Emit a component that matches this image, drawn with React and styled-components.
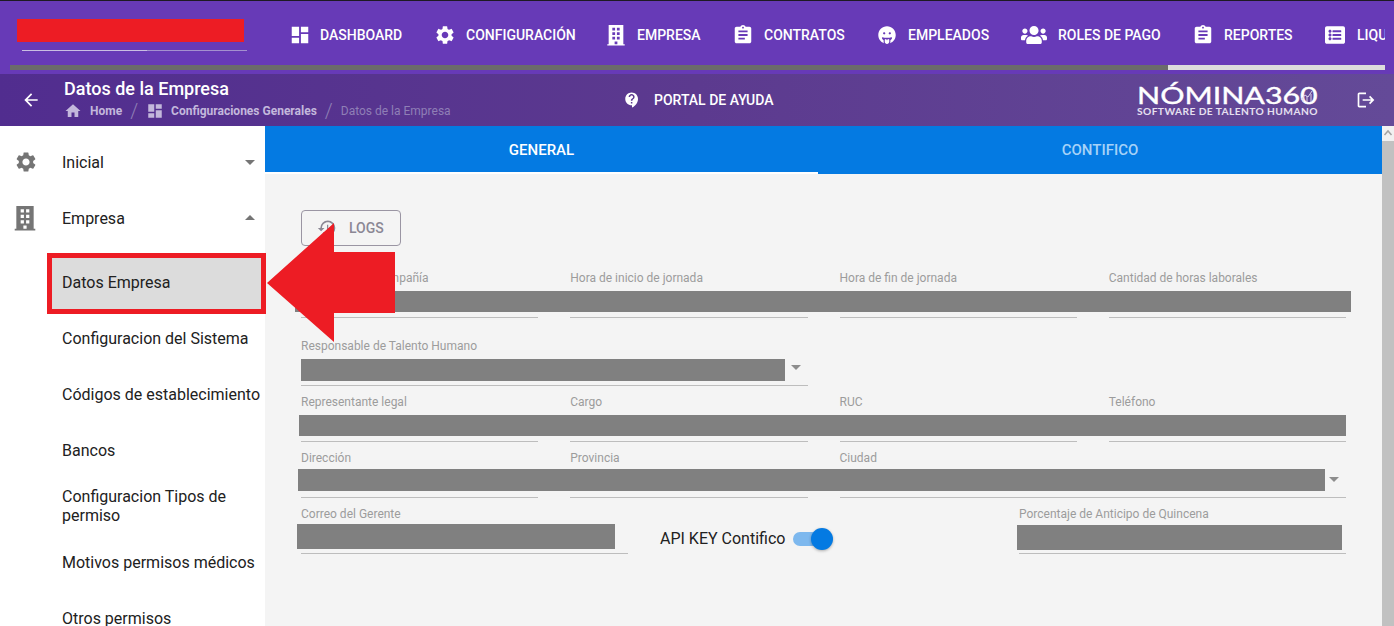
import React from 'react';
import styled, { createGlobalStyle } from 'styled-components';
import { MdDashboard, MdSettings, MdAssignment, MdArrowBack, MdHome, MdContactSupport, MdHistory, MdArrowDropDown, MdArrowDropUp, MdLogout } from 'react-icons/md';
import { FaGrinTongue, FaUsers, FaListAlt } from 'react-icons/fa';

const Global = createGlobalStyle`
  html, body { margin: 0; padding: 0; height: 100%; overflow: hidden; background: #fff; }
  body { font-family: Roboto, "Liberation Sans", sans-serif; }
  * { box-sizing: border-box; }
`;

const Page = styled.div`
  position: relative;
  width: 1394px;
  height: 626px;
  overflow: hidden;
  display: flex;
  flex-direction: column;
  border-top: 1px solid #1d1a24;
`;

const TopBar = styled.header`
  height: 73px;
  flex: none;
  background: #673ab7;
  display: flex;
  flex-direction: column;
  overflow: hidden;
`;
const TopRow = styled.div`
  height: 64px;
  width: 1385px;
  overflow: hidden;
  display: flex;
  align-items: center;
`;
const Brand = styled.div`
  width: 291px;
  flex: none;
  height: 100%;
  padding: 49px 0 0 22px;
`;
const BrandRule = styled.div`
  width: 225px;
  height: 1px;
  background: linear-gradient(90deg, #c9bee3 0 125px, #a491cf 125px 100%);
`;
const Nav = styled.nav`
  display: flex;
  align-items: center;
  height: 100%;
  margin-top: 4px;
`;
const NavItem = styled.a`
  display: flex;
  align-items: center;
  flex: none;
  width: ${p => p.$w}px;
  color: #fff;
  font-size: 14px;
  font-weight: 500;
  text-transform: uppercase;
  white-space: nowrap;
  svg { flex: none; }
`;
const NavIconBox = styled.span`
  width: ${p => p.$w}px;
  flex: none;
  display: flex;
  align-items: center;
`;
const HScrollTrack = styled.div`
  margin: 0 0 0 10px;
  width: 1375px;
  height: 5px;
  background: #dcdcdc;
`;
const HScrollThumb = styled.div`
  width: 1158px;
  height: 100%;
  background: #6b6b6b;
`;

const SubHeader = styled.div`
  height: 52px;
  flex: none;
  display: flex;
  align-items: center;
  color: #fff;
  background: linear-gradient(90deg, #512d8f 0%, #5c3a8f 50%, #644a98 100%);
`;
const BackSlot = styled.div`
  width: 64px;
  flex: none;
  padding-left: 21px;
  display: flex;
  align-items: center;
`;
const TitleBlock = styled.div`
  width: 559px;
  flex: none;
  padding-bottom: 2px;
`;
const PageTitle = styled.div`
  font-size: 18px;
  font-weight: 500;
  line-height: 24px;
`;
const Crumbs = styled.div`
  display: flex;
  align-items: center;
  height: 20px;
  font-size: 12px;
  font-weight: 700;
  color: #c3b8dc;
  svg { flex: none; color: #c3b8dc; }
`;
const CrumbText = styled.span`
  margin-left: ${p => p.$ml || 0}px;
  color: ${p => (p.$muted ? '#8f7fb6' : '#c3b8dc')};
  font-weight: ${p => (p.$muted ? 400 : 700)};
  white-space: nowrap;
`;
const Slash = styled.span`
  margin: 0 8px;
  font-size: 20px;
  font-weight: 300;
  color: #8f7fb6;
`;
const Help = styled.div`
  width: 514px;
  flex: none;
  display: flex;
  align-items: center;
  gap: 13px;
  font-size: 14px;
  font-weight: 500;
  white-space: nowrap;
  margin-top: -1px;
`;
const Logo = styled.div`
  width: 219px;
  flex: none;
  display: flex;
  flex-direction: column;
  color: #fff;
  white-space: nowrap;
  font-family: Lato, sans-serif;
  margin-top: 3px;
`;
const LogoMark = styled.div`
  position: relative;
  height: 17px;
  font-size: 23px;
  font-weight: 400;
  line-height: 17px;
  -webkit-text-stroke: 0.35px #fff;
`;
const LogoWord = styled.span`
  display: inline-block;
  transform: scaleX(1.32);
  transform-origin: left center;
`;
const LogoChart = styled.svg`
  position: absolute;
  left: 159px;
  top: -1px;
  width: 22px;
  height: 20px;
`;
const LogoSmall = styled.div`
  font-size: 10.2px;
  line-height: 10px;
  font-weight: 700;
  letter-spacing: 0.42px;
  color: #e6e0f0;
  margin-top: 2px;
`;

const Body = styled.div`
  flex: 1;
  min-height: 0;
  display: flex;
`;
const Sidebar = styled.aside`
  width: 265px;
  flex: none;
  padding-top: 8px;
  background: #fff;
  overflow: hidden;
`;
const MenuRow = styled.div`
  height: 56px;
  display: flex;
  align-items: center;
  position: relative;
  padding-left: 62px;
  font-size: 16px;
  line-height: 19px;
  color: #212121;
`;
const MenuIcon = styled.span`
  position: absolute;
  left: ${p => p.$l}px;
  top: 50%;
  transform: translateY(-50%);
  display: flex;
  color: #757575;
`;
const MenuCaret = styled.span`
  position: absolute;
  right: 3px;
  top: 50%;
  transform: translateY(-50%);
  display: flex;
  color: #757575;
`;
const SubMenu = styled.div`
  padding-top: 8px;
`;
const SubRow = styled(MenuRow)`
  margin-left: 47px;
  padding-left: 15px;
  padding-right: 2px;
  white-space: ${p => (p.$wrap ? 'normal' : 'nowrap')};
  background: ${p => (p.$active ? '#dcdcdc' : 'transparent')};
`;

const Main = styled.main`
  flex: 1;
  min-width: 0;
  background: #f4f4f4;
`;
const Tabs = styled.div`
  display: flex;
  height: 48px;
  background: #047ae2;
`;
const Tab = styled.div`
  flex: ${p => (p.$active ? '0 0 553px' : '1')};
  display: flex;
  align-items: center;
  justify-content: center;
  font-size: 15px;
  font-weight: 500;
  color: ${p => (p.$active ? '#fff' : '#a6d2f8')};
  border-bottom: 2px solid ${p => (p.$active ? '#fff' : 'transparent')};
  padding-top: 2px;
`;
const Form = styled.div`
  padding: 36px 36px 0;
`;
const LogsButton = styled.button`
  width: 100px;
  height: 36px;
  margin-bottom: 22px;
  display: flex;
  align-items: center;
  gap: 12px;
  padding: 0 0 0 15px;
  background: transparent;
  border: 1px solid #9a95a3;
  border-radius: 4px;
  font: 500 14px Roboto, sans-serif;
  color: #8b8794;
`;
const FourCols = styled.div`
  display: grid;
  grid-template-columns: repeat(4, 1fr);
  column-gap: 32px;
`;
const ThreeCols = styled.div`
  display: grid;
  grid-template-columns: repeat(3, 1fr);
  column-gap: 32px;
`;
const Field = styled.div`
  height: ${p => (p.$first ? 68 : 56)}px;
  grid-column: span ${p => p.$span || 1};
  position: relative;
`;
const FieldLabel = styled.div`
  font-size: 12px;
  line-height: 20px;
  color: #9c9c9c;
  white-space: nowrap;
`;
const FieldLine = styled.div`
  height: 30px;
  border-bottom: 1px solid #bdbdbd;
`;
const SelectCaret = styled.span`
  position: absolute;
  right: 0;
  top: 19px;
  display: flex;
  color: #8d8d8d;
`;
const SwitchCell = styled.div`
  height: 56px;
  display: flex;
  align-items: center;
  gap: 8px;
  font-size: 16px;
  color: #212121;
  padding-top: 12px;
`;
const SwitchTrack = styled.span`
  position: relative;
  width: 34px;
  height: 14px;
  margin-top: 1px;
  border-radius: 7px;
  background: #7db8ee;
`;
const SwitchKnob = styled.span`
  position: absolute;
  right: -6px;
  top: -4px;
  width: 22px;
  height: 22px;
  border-radius: 50%;
  background: #047ae2;
  box-shadow: 0 1px 3px rgba(0, 0, 0, 0.3);
`;

const VScroll = styled.div`
  width: 12px;
  flex: none;
  background: #f1f1f1;
  display: flex;
  flex-direction: column;
  align-items: center;
`;
const VScrollArrow = styled.svg`
  flex: none;
  width: 12px;
  height: 15px;
`;
const VScrollThumb = styled.div`
  flex: 1;
  width: 100%;
  background: #c1c1c1;
`;

/* Censored areas and the annotation that lie over the finished page */
const Redact = styled.div`
  position: absolute;
  left: ${p => p.$x}px;
  top: ${p => p.$y}px;
  width: ${p => p.$w}px;
  height: ${p => p.$h}px;
  background: ${p => p.$c || '#808080'};
`;
const Frame = styled.div`
  position: absolute;
  left: 47px;
  top: 252px;
  width: 219px;
  height: 61px;
  border: 5px solid #ed1c24;
`;
const ArrowMark = styled.svg`
  position: absolute;
  left: 266px;
  top: 221px;
  width: 132px;
  height: 122px;
`;

const Building = ({ size, color = 'currentColor' }) => (
  <svg width={size} height={size} viewBox="0 0 24 24" fill={color}>
    <path fillRule="evenodd" d="M4 1h16v21h1.5v1.5h-19V22H4V1zM8 4v3h3V4H8zm5 0v3h3V4h-3zM8 9v3h3V9H8zm5 0v3h3V9h-3zm-5 5v3h3v-3H8zm5 0v3h3v-3h-3zm-2.5 5v3h3v-3h-3z" />
  </svg>
);

const navItems = [
  { label: 'Dashboard', w: 145, iw: 29, Icon: MdDashboard, s: 22, o: -2 },
  { label: 'Configuración', w: 172, iw: 30, Icon: MdSettings, s: 22, o: -2 },
  { label: 'Empresa', w: 127, iw: 29, Icon: Building, s: 22, o: -3 },
  { label: 'Contratos', w: 143, iw: 29, Icon: MdAssignment, s: 22, o: -3 },
  { label: 'Empleados', w: 143, iw: 30, Icon: FaGrinTongue, s: 18, o: 0 },
  { label: 'Roles de pago', w: 174, iw: 37, Icon: FaUsers, s: 26, o: 0 },
  { label: 'Reportes', w: 130, iw: 29, Icon: MdAssignment, s: 22, o: -3 },
  { label: 'Liquidaciones', w: 150, iw: 32, Icon: FaListAlt, s: 20, o: 0 },
];

const subItems = [
  { t: 'Datos Empresa', active: true },
  { t: 'Configuracion del Sistema' },
  { t: 'Códigos de establecimiento' },
  { t: 'Bancos' },
  { t: 'Configuracion Tipos de permiso', wrap: true },
  { t: 'Motivos permisos médicos' },
  { t: 'Otros permisos' },
];

const TextField = ({ label, span, select, first }) => (
  <Field $span={span} $first={first}>
    <FieldLabel>{label}</FieldLabel>
    <FieldLine />
    {select && (
      <SelectCaret>
        <MdArrowDropDown size={24} />
      </SelectCaret>
    )}
  </Field>
);

export default function App() {
  return (
    <>
      <Global />
      <Page>
        <TopBar>
          <TopRow>
            <Brand>
              <BrandRule />
            </Brand>
            <Nav>
              {navItems.map(({ label, w, iw, Icon, s, o }) => (
                <NavItem key={label} $w={w}>
                  <NavIconBox $w={iw}>
                    <span style={{ display: 'flex', marginLeft: o }}>
                      <Icon size={s} color="#fff" />
                    </span>
                  </NavIconBox>
                  {label}
                </NavItem>
              ))}
            </Nav>
          </TopRow>
          <HScrollTrack>
            <HScrollThumb />
          </HScrollTrack>
        </TopBar>

        <SubHeader>
          <BackSlot>
            <MdArrowBack size={20} />
          </BackSlot>
          <TitleBlock>
            <PageTitle>Datos de la Empresa</PageTitle>
            <Crumbs>
              <MdHome size={18} />
              <CrumbText $ml={8}>Home</CrumbText>
              <Slash>/</Slash>
              <MdDashboard size={18} />
              <CrumbText $ml={7}>Configuraciones Generales</CrumbText>
              <Slash>/</Slash>
              <CrumbText $muted>Datos de la Empresa</CrumbText>
            </Crumbs>
          </TitleBlock>
          <Help>
            <MdContactSupport size={18} />
            PORTAL DE AYUDA
          </Help>
          <Logo>
            <LogoMark>
              <LogoWord>NÓMINA360</LogoWord>
              <LogoChart viewBox="0 0 22 20">
                <g stroke="#d9d0ea" strokeWidth="1" fill="none">
                  <path d="M5 14l4-5 3 2 4-6" />
                  <path d="M7 16V12M11 16V10M15 16V8" />
                </g>
              </LogoChart>
            </LogoMark>
            <LogoSmall>SOFTWARE DE TALENTO HUMANO</LogoSmall>
          </Logo>
          <MdLogout size={20} />
        </SubHeader>

        <Body>
          <Sidebar>
            <MenuRow>
              <MenuIcon $l={14}>
                <MdSettings size={24} />
              </MenuIcon>
              Inicial
              <MenuCaret>
                <MdArrowDropDown size={24} />
              </MenuCaret>
            </MenuRow>
            <MenuRow>
              <MenuIcon $l={12}>
                <Building size={26} />
              </MenuIcon>
              Empresa
              <MenuCaret>
                <MdArrowDropUp size={24} />
              </MenuCaret>
            </MenuRow>
            <SubMenu>
              {subItems.map(i => (
                <SubRow key={i.t} $active={i.active} $wrap={i.wrap}>
                  {i.t}
                </SubRow>
              ))}
            </SubMenu>
          </Sidebar>

          <Main>
            <Tabs>
              <Tab $active>GENERAL</Tab>
              <Tab>CONTIFICO</Tab>
            </Tabs>
            <Form>
              <LogsButton>
                <MdHistory size={20} />
                LOGS
              </LogsButton>
              <FourCols>
                <TextField first label="Nombre de la compañía" />
                <TextField first label="Hora de inicio de jornada" />
                <TextField first label="Hora de fin de jornada" />
                <TextField first label="Cantidad de horas laborales" />
                <TextField label="Responsable de Talento Humano" span={2} select />
                <Field $span={2} />
                <TextField label="Representante legal" />
                <TextField label="Cargo" />
                <TextField label="RUC" />
                <TextField label="Teléfono" />
                <TextField label="Dirección" />
                <TextField label="Provincia" />
                <TextField label="Ciudad" span={2} select />
              </FourCols>
              <ThreeCols>
                <TextField label="Correo del Gerente" />
                <SwitchCell>
                  API KEY Contifico
                  <SwitchTrack>
                    <SwitchKnob />
                  </SwitchTrack>
                </SwitchCell>
                <TextField label="Porcentaje de Anticipo de Quincena" />
              </ThreeCols>
            </Form>
          </Main>

          <VScroll>
            <VScrollArrow viewBox="0 0 12 15">
              <path d="M2.5 9L6 5l3.5 4" fill="none" stroke="#a3a3a3" strokeWidth="1.5" />
            </VScrollArrow>
            <VScrollThumb />
          </VScroll>
        </Body>

        <Redact $x={17} $y={18} $w={227} $h={23} $c="#ed1c24" />
        <Redact $x={295} $y={290} $w={1056} $h={21} />
        <Redact $x={301} $y={358} $w={484} $h={22} />
        <Redact $x={299} $y={414} $w={1047} $h={21} />
        <Redact $x={298} $y={468} $w={1027} $h={22} />
        <Redact $x={297} $y={523} $w={318} $h={25} />
        <Redact $x={1017} $y={524} $w={325} $h={25} />
        <Frame />
        <ArrowMark viewBox="0 0 132 122">
          <path d="M1 61L68 1V30H129V91H68V120Z" fill="#ed1c24" />
        </ArrowMark>
      </Page>
    </>
  );
}
